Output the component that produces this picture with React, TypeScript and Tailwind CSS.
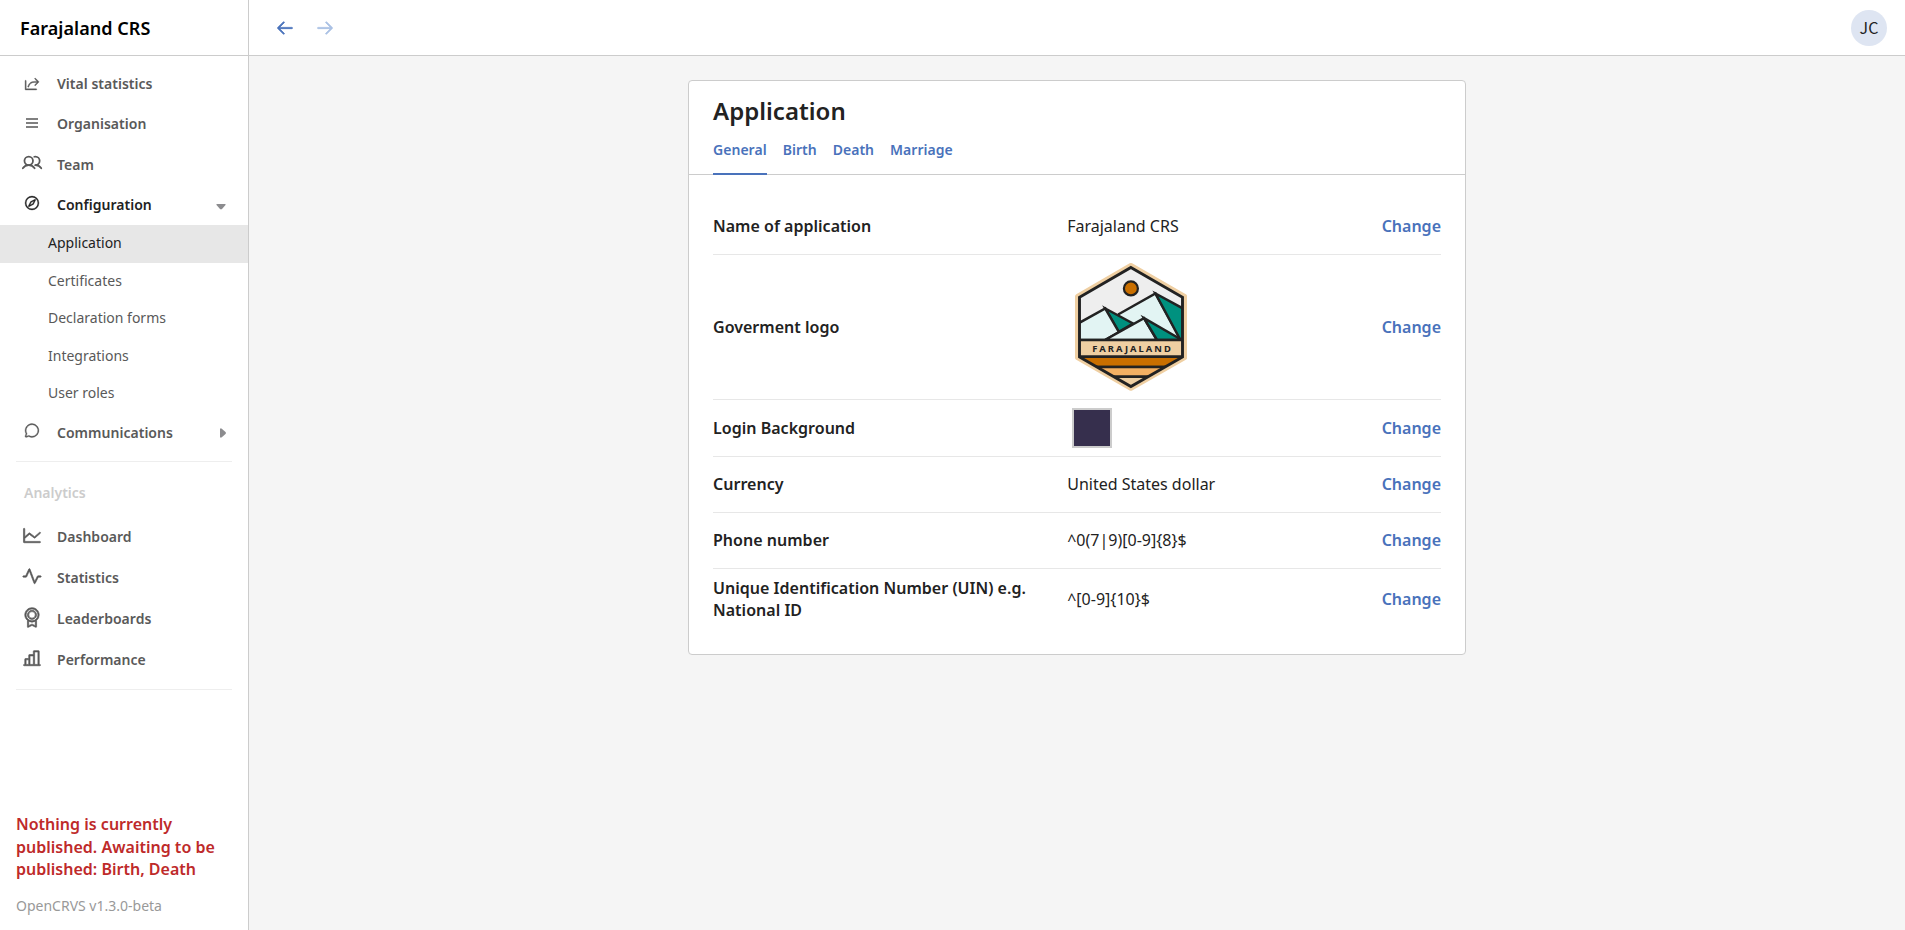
import type { ReactNode } from 'react'
import {
  PiShare,
  PiCompass,
  PiChatCircle,
  PiChartLine,
  PiPulse,
  PiMedal,
  PiChartBar,
  PiArrowLeft,
  PiArrowRight,
} from 'react-icons/pi'

type NavProps = {
  icon: ReactNode
  label: string
  height: string
  active?: boolean
  caret?: ReactNode
}

function NavItem({ icon, label, height, active, caret }: NavProps) {
  return (
    <div className={`flex items-center pl-5 pr-[22px] ${height} ${active ? 'text-[#222222]' : 'text-[#595959]'}`}>
      <span className="mb-1 flex h-6 w-6 items-center justify-center">{icon}</span>
      <span className="ml-[13px] flex-1 text-sm font-semibold tracking-[0.02px]">{label}</span>
      {caret}
    </div>
  )
}

function SubItem({ label, active }: { label: string; active?: boolean }) {
  return (
    <div
      className={`flex h-[37.5px] items-center pb-px pl-12 text-sm ${active ? 'bg-[#e7e7e7] text-[#222222]' : 'text-[#595959]'}`}
    >
      {label}
    </div>
  )
}

type RowProps = { label: string; height: string; children: ReactNode; last?: boolean }

function Row({ label, height, children, last }: RowProps) {
  return (
    <div className={`flex items-center ${height} ${last ? '' : 'border-b border-[#e7e7e7]'}`}>
      <div className="w-[354.2px] pr-6 font-semibold tracking-[0.02px]">{label}</div>
      <div className="flex-1">{children}</div>
      <button className="font-semibold text-[#4972bb]">Change</button>
    </div>
  )
}

function TeamIcon() {
  return (
    <svg
      width="21"
      height="21"
      viewBox="0 0 256 256"
      fill="none"
      stroke="currentColor"
      strokeWidth="22"
      strokeLinecap="round"
      strokeLinejoin="round"
      className="-translate-x-[0.5px]"
    >
      <circle cx="88" cy="108" r="52" />
      <path d="M155.400 57.900A54.500 54.500 0 0 1 169.500 56a52 52 0 0 1 0 104" />
      <path d="M16 197.400a88 88 0 0 1 144 0" />
      <path d="M169.500 160a87.900 87.900 0 0 1 72 37.400" />
    </svg>
  )
}

function Logo() {
  return (
    <svg width="112" height="128" viewBox="1075 263 112 128" className="ml-[7.8px]">
      <defs>
        <clipPath id="crest">
          <path d="M1130.900 267.500 L1182.500 297.300 V357 L1130.900 386.600 L1079.500 357 V297.300Z" />
        </clipPath>
      </defs>
      <path
        d="M1130.900 265.500 L1184.600 296.500 V357.700 L1130.900 388.300 L1077.500 357.700 V296.500Z"
        fill="#efcfa2"
        stroke="#efcfa2"
        strokeWidth="5"
        strokeLinejoin="round"
      />
      <g clipPath="url(#crest)">
        <path d="M1075 263H1187V341H1075Z" fill="#eeeeee" />
        <g stroke="#222222" strokeWidth="2.500">
          <path d="M1119 314 L1155.500 293.500 L1181 340 H1100Z" fill="#e2f4f3" />
          <path d="M1155.500 293.500 L1184 309 V341 H1181Z" fill="#00917f" />
          <path d="M1105.300 308.500 L1133 323.500 L1118.500 332Z" fill="#00917f" />
          <path d="M1078 323.500 L1105.300 308.500 L1119 332 L1105 340 H1078Z" fill="#e2f4f3" />
          <path d="M1105 340 L1144 318.200 L1157 340Z" fill="#e2f4f3" />
          <path d="M1144 318.200 L1182 340 H1157Z" fill="#00917f" />
          <path d="M1078 340H1184V356.700H1078Z" fill="#efcfa2" />
          <path d="M1078 356.700H1184V367H1078Z" fill="#c96f00" />
          <path d="M1078 367H1184V376.700H1078Z" fill="#f3b063" />
          <path d="M1078 376.700H1184V390H1078Z" fill="#efcfa2" />
        </g>
      </g>
      <circle cx="1130.900" cy="288.400" r="7" fill="#c96f00" stroke="#222222" strokeWidth="2.200" />
      <path
        d="M1130.900 267.500 L1182.500 297.300 V357 L1130.900 386.600 L1079.500 357 V297.300Z"
        fill="none"
        stroke="#222222"
        strokeWidth="2.900"
      />
      <text x="1092.300" y="352" textLength="78.500" fill="#222222" className="text-[9.400px] font-bold">
        FARAJALAND
      </text>
    </svg>
  )
}

const tabs = ['Birth', 'Death', 'Marriage']

export default function App() {
  return (
    <div className="flex h-[930px] w-[1905px] overflow-hidden bg-[#f5f5f5] font-['Noto_Sans',sans-serif] text-[#222222]">
      <aside className="flex w-[249px] shrink-0 flex-col border-r border-[#cccccc] bg-white">
        <div className="flex h-14 items-center border-b border-[#cccccc] pl-5 text-lg font-semibold tracking-[0.04px] text-black">
          Farajaland CRS
        </div>
        <nav className="flex flex-col pt-2">
          <NavItem
            height="h-10"
            label="Vital statistics"
            icon={<PiShare size={17} strokeWidth={6} className="mt-[3px] -translate-x-[0.5px]" />}
          />
          <NavItem
            height="h-10"
            label="Organisation"
            icon={
              <svg width="12" height="10" viewBox="0 0 12 10" className="mt-0.5">
                <path d="M0 1H12M0 5H12M0 9H12" stroke="#808080" strokeWidth="1.900" />
              </svg>
            }
          />
          <NavItem height="h-[41px]" label="Team" icon={<TeamIcon />} />
          <NavItem
            height="h-10"
            label="Configuration"
            active
            icon={<PiCompass size={17} strokeWidth={6} className="-translate-x-[0.5px] -translate-y-[0.5px]" />}
            caret={
              <svg width="10" height="6" viewBox="0 0 10 6" className="mt-1">
                <path d="M0.500 0H9.500V1L5.800 5.300H4.200L0.500 1Z" fill="#8c8c8f" />
              </svg>
            }
          />
          <SubItem label="Application" active />
          <SubItem label="Certificates" />
          <SubItem label="Declaration forms" />
          <SubItem label="Integrations" />
          <SubItem label="User roles" />
          <NavItem
            height="h-10"
            label="Communications"
            icon={<PiChatCircle size={17} strokeWidth={6} className="-translate-x-[0.5px]" />}
            caret={
              <svg width="6" height="10" viewBox="0 0 6 10">
                <path d="M0 0.500V9.500H1.500L5.800 5.800V4.200L1.500 0.500Z" fill="#8c8c8f" />
              </svg>
            }
          />
        </nav>
        <div className="mx-4 mt-2 h-px bg-[#eeeeee]" />
        <div className="mt-[21px] pl-6 text-sm font-semibold text-[#cccccc]">Analytics</div>
        <div className="mt-3.5 flex flex-col">
          <NavItem
            height="h-[41px]"
            label="Dashboard"
            icon={<PiChartLine size={21} strokeWidth={8} className="-translate-x-[0.5px]" />}
          />
          <NavItem
            height="h-[41px]"
            label="Statistics"
            icon={<PiPulse size={21} strokeWidth={8} className="-translate-x-[0.5px]" />}
          />
          <NavItem
            height="h-[41px]"
            label="Leaderboards"
            icon={<PiMedal size={21} strokeWidth={8} className="-translate-x-[0.5px]" />}
          />
          <NavItem
            height="h-[41px]"
            label="Performance"
            icon={<PiChartBar size={21} strokeWidth={8} className="-translate-x-[0.5px]" />}
          />
        </div>
        <div className="mx-4 mt-2 h-px bg-[#eeeeee]" />
        <div className="mt-auto px-4 pb-[14px]">
          <p className="font-semibold leading-[22.4px] tracking-[0.01px] text-[#be2a2a]">
            Nothing is currently published. Awaiting to be published: Birth, Death
          </p>
          <p className="mt-[15.6px] text-sm text-[#999999]">OpenCRVS v1.3.0-beta</p>
        </div>
      </aside>
      <div className="flex flex-1 flex-col">
        <header className="flex h-14 items-center border-b border-[#cccccc] bg-white pl-[26px] pr-[18px]">
          <PiArrowLeft size={20} strokeWidth={10} className="text-[#4972bb]" />
          <PiArrowRight size={20} strokeWidth={10} className="ml-5 text-[#a9c0e4]" />
          <div className="ml-auto flex h-9 w-9 items-center justify-center rounded-full bg-[#dee5f2] pb-0.5 font-['Noto_Sans_CJK_SC',sans-serif]">
            JC
          </div>
        </header>
        <main className="flex flex-1 items-start justify-center pt-6">
          <section className="flex w-[778px] flex-col rounded border border-[#cccccc] bg-white">
            <div className="flex h-[94px] flex-col border-b border-[#cccccc] px-6">
              <h1 className="mt-3 text-2xl font-semibold leading-9 tracking-[0.02px]">Application</h1>
              <div className="-mb-px mt-auto flex h-[35px] gap-4 text-sm font-semibold tracking-[0.03px] text-[#4972bb]">
                <span className="h-full border-b-2 border-[#4972bb]">General</span>
                {tabs.map((t) => (
                  <span key={t}>{t}</span>
                ))}
              </div>
            </div>
            <div className="p-6 text-base leading-[22px]">
              <Row label="Name of application" height="h-14 pb-px">
                Farajaland CRS
              </Row>
              <Row label="Goverment logo" height="h-[145px]">
                <Logo />
              </Row>
              <Row label="Login Background" height="h-[57px]">
                <div className="ml-[4.8px] h-10 w-10 border-2 border-[#cccccc] bg-[#362f4d]" />
              </Row>
              <Row label="Currency" height="h-14 pb-px">
                United States dollar
              </Row>
              <Row label="Phone number" height="h-14 pb-px">
                {'^0(7|9)[0-9]{8}$'}
              </Row>
              <Row
                label="Unique Identification Number (UIN) e.g. National ID"
                height="h-[61px] pb-px"
                last
              >
                {'^[0-9]{10}$'}
              </Row>
            </div>
          </section>
        </main>
      </div>
    </div>
  )
}
